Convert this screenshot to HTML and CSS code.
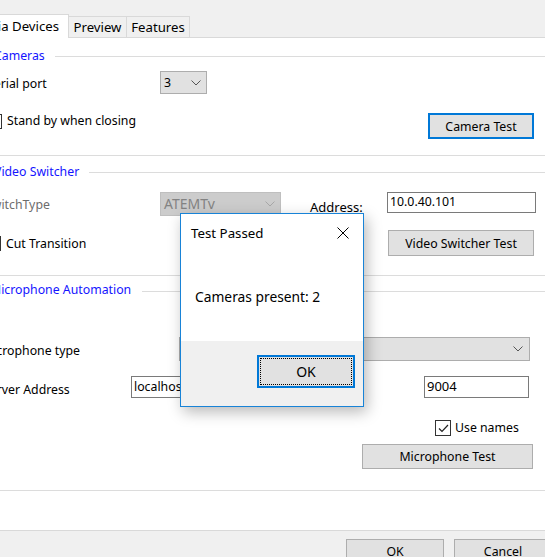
FILE: index.html
```html
<!DOCTYPE html>
<html>
<head>
<meta charset="utf-8">
<link rel="stylesheet" href="styles.css">
</head>
<body>
<div class="window">
  <div class="tabstrip">
    <div class="tab active">Media Devices</div>
    <div class="tab tab-preview">Preview</div>
    <div class="tab tab-features">Features</div>
  </div>
  <div class="panel">
    <section class="group g-cam">
      <div class="group-head"><span class="group-title">Cameras</span><span class="rule"></span></div>
      <div class="row row-serial">
        <span class="lbl lbl-serial">Serial port</span>
        <div class="combo combo-port"><span class="combo-text">3</span><svg class="chev" width="10" height="6" viewBox="0 0 10 6"><path d="M0.5 0.5 L5 5 L9.5 0.5" fill="none" stroke="#555" stroke-width="1"/></svg></div>
      </div>
      <div class="row row-standby">
        <div class="check"><span class="box"></span><span class="check-text">Stand by when closing</span></div>
        <button class="btn btn-focus btn-camera">Camera Test</button>
      </div>
    </section>

    <section class="group g-video">
      <div class="group-head"><span class="group-title">Video Switcher</span><span class="rule"></span></div>
      <div class="row row-switch">
        <span class="lbl lbl-disabled lbl-switch">SwitchType</span>
        <div class="combo combo-disabled combo-switch"><span class="combo-text">ATEMTv</span><svg class="chev" width="10" height="6" viewBox="0 0 10 6"><path d="M0.5 0.5 L5 5 L9.5 0.5" fill="none" stroke="#a8a8a8" stroke-width="1"/></svg></div>
        <span class="lbl lbl-address">Address:</span>
        <div class="textbox tb-address">10.0.40.101</div>
      </div>
      <div class="row row-cut">
        <div class="check check-cut"><span class="box"></span><span class="check-text">Cut Transition</span></div>
        <button class="btn btn-video">Video Switcher Test</button>
      </div>
    </section>

    <section class="group g-mic">
      <div class="group-head"><span class="group-title">Microphone Automation</span><span class="rule"></span></div>
      <div class="row row-mictype">
        <span class="lbl lbl-mictype">Microphone type</span>
        <div class="combo combo-mic"><span class="combo-text"></span><svg class="chev" width="10" height="6" viewBox="0 0 10 6"><path d="M0.5 0.5 L5 5 L9.5 0.5" fill="none" stroke="#555" stroke-width="1"/></svg></div>
      </div>
      <div class="row row-server">
        <span class="lbl lbl-server">Server Address</span>
        <div class="textbox tb-host">localhost</div>
        <div class="textbox tb-port">9004</div>
      </div>
      <div class="row row-names">
        <div class="check check-names"><span class="box checked"><svg width="13" height="13" viewBox="0 0 13 13"><path d="M2 6.5 L5 9.5 L11 3" fill="none" stroke="#222" stroke-width="1.2"/></svg></span><span class="check-text">Use names</span></div>
      </div>
      <div class="row row-mictest">
        <button class="btn btn-mic">Microphone Test</button>
      </div>
    </section>
  </div>
  <div class="footer">
    <button class="btn btn-ok">OK</button>
    <button class="btn btn-cancel">Cancel</button>
  </div>

  <div class="dialog">
    <div class="dlg-title">
      <span class="dlg-title-text">Test Passed</span>
      <svg class="dlg-close" width="12" height="12" viewBox="0 0 12 12"><path d="M0.5 0.5 L11.5 11.5 M11.5 0.5 L0.5 11.5" stroke="#000" stroke-width="1" fill="none"/></svg>
    </div>
    <div class="dlg-body">Cameras present: 2</div>
    <div class="dlg-footer">
      <button class="btn dlg-ok">OK</button>
    </div>
  </div>
</div>
</body>
</html>
```
FILE: styles.css
```css
* { box-sizing: border-box; }
html, body { margin: 0; padding: 0; }
body {
  width: 545px;
  height: 557px;
  overflow: hidden;
  background: #f0f0f0;
  font-family: "Noto Sans", "DejaVu Sans", sans-serif;
  font-size: 12.3px;
  color: #000;
}
.window {
  position: relative;
  width: 545px;
  height: 557px;
  overflow: hidden;
}

/* Base controls */
.btn {
  font-family: inherit;
  font-size: 12.3px;
  color: #000;
  background: #e1e1e1;
  border: 1px solid #adadad;
  padding: 0;
  margin: 0;
  text-align: center;
  white-space: nowrap;
}

/* Tabs */
.tabstrip {
  height: 37px;
  display: flex;
  align-items: flex-end;
  margin-left: -40px;
  font-size: 13.2px;
}
.tab {
  height: 21px;
  border: 1px solid #d9d9d9;
  border-bottom: none;
  background: #f0f0f0;
  text-align: center;
  line-height: 21px;
  margin-left: -1px;
  white-space: nowrap;
}
.tab.active {
  position: relative;
  z-index: 1;
  height: 24px;
  margin-bottom: -1px;
  width: 109px;
  background: #fff;
  line-height: 22px;
  margin-left: 0;
  text-align: right;
  padding-right: 9px;
}
.tab-preview { width: 59px; }
.tab-features { width: 64px; }

/* Panel */
.panel {
  height: 494px;
  background: #fff;
  border-top: 1px solid #d9d9d9;
  border-bottom: 1px solid #d9d9d9;
  padding-top: 10px;
}
.group {
  border-bottom: 1px solid #dcdcdc;
}
.group-head {
  height: 16px;
  display: flex;
  align-items: center;
  margin-left: -6px;
}
.group-title {
  color: #1414ff;
  line-height: 16px;
  white-space: nowrap;
}
.rule {
  flex: 1;
  height: 1px;
  background: #dcdcdc;
  margin-left: 10px;
  margin-top: 1px;
}
.g-cam { padding-bottom: 16px; }
.g-video { margin-top: 8px; padding-bottom: 19px; }
.g-mic { margin-top: 6px; padding-bottom: 21px; }
.g-mic .group-head { margin-left: -10px; }
.g-mic .rule { margin-top: 3px; margin-left: 11px; }

.row {
  display: flex;
  align-items: flex-start;
  white-space: nowrap;
}
.lbl { line-height: 16px; }
.lbl-disabled { color: #6d6d6d; }

/* Cameras rows */
.row-serial { margin-top: 7px; margin-left: -13px; }
.lbl-serial { width: 173px; margin-top: 5px; }
.row-standby { margin-top: 19px; margin-left: -13px; width: 547px; }

/* Video rows */
.row-switch { margin-top: 12px; margin-left: -15px; }
.lbl-switch { width: 175px; margin-top: 5px; }
.lbl-address { margin-left: 29px; width: 77px; margin-top: 7px; font-size: 13px; }
.row-cut { margin-top: 14px; margin-left: -14px; width: 548px; }
.check-cut { margin-top: 6px; }

/* Mic rows */
.row-mictype { margin-top: 39px; margin-left: -18px; }
.lbl-mictype { width: 197px; margin-top: 6px; }
.row-server { margin-top: 15px; margin-left: -17px; width: 546px; }
.lbl-server { width: 148px; margin-top: 6px; }
.row-names { margin-top: 22px; }
.check-names { margin-left: 435px; }
.row-mictest { margin-top: 8px; }
.btn.btn-mic { margin-left: 362px; width: 171px; height: 25px; }

/* Controls */
.combo {
  display: flex;
  align-items: center;
  justify-content: space-between;
  background: #e1e1e1;
  border: 1px solid #adadad;
  padding: 0 5px 0 3px;
}
.combo-text { line-height: 16px; }
.combo-port { width: 47px; height: 23px; }
.combo-switch { width: 121px; height: 24px; }
.combo-mic { width: 351px; height: 24px; padding-right: 6px; }
.combo-disabled {
  background: #cccccc;
  border-color: #bfbfbf;
  color: #838383;
}
.combo-disabled .combo-text { font-size: 14px; }
.textbox {
  background: #fff;
  border: 1px solid #7a7a7a;
  padding-left: 2px;
  line-height: 18px;
}
.tb-address { width: 149px; height: 21px; }
.tb-host { width: 220px; height: 22px; line-height: 19px; }
.tb-port { width: 105px; height: 22px; margin-left: auto; line-height: 19px; font-size: 13px; }

.check {
  display: flex;
  align-items: flex-start;
}
.box {
  width: 15px;
  height: 15px;
  border: 1px solid #333;
  background: #fff;
  margin-top: 1px;
  margin-right: 5px;
  display: flex;
  align-items: center;
  justify-content: center;
}
.check-cut .box { margin-top: 0; }
.check-names .box { margin-right: 4px; width: 16px; height: 16px; margin-top: 0; }
.check-text { line-height: 16px; }

.btn-focus { border: 2px solid #0078d7; }
.btn.btn-camera { margin-left: auto; width: 106px; height: 26px; }
.btn.btn-video { margin-left: auto; width: 146px; height: 26px; }

/* Footer */
.footer {
  display: flex;
  padding-top: 8px;
  padding-left: 346px;
  gap: 10px;
}
.btn.btn-ok, .btn.btn-cancel { width: 98px; height: 24px; flex: none; }

/* Dialog */
.dialog {
  position: absolute;
  left: 180px;
  top: 213px;
  width: 184px;
  height: 194px;
  background: #fff;
  border: 1px solid #1883d7;
  box-shadow: 3px 5px 14px rgba(0, 0, 0, 0.28);
  display: flex;
  flex-direction: column;
  z-index: 5;
}
.dlg-title {
  height: 38px;
  display: flex;
  align-items: center;
  justify-content: space-between;
  padding: 0 14px 0 10px;
}
.dlg-title-text { font-size: 13.3px; }
.dlg-close { display: block; }
.dlg-body {
  height: 89px;
  padding: 37px 0 0 14px;
  line-height: 16px;
  font-size: 13.8px;
}
.dlg-footer {
  flex: 1;
  background: #f0f0f0;
  display: flex;
  justify-content: flex-end;
  align-items: flex-start;
  padding: 14px 8px 0 0;
}
.btn.dlg-ok {
  width: 98px;
  height: 33px;
  border: 2px solid #0078d7;
  outline: 1px dotted #000;
  outline-offset: -4px;
  font-size: 14px;
}
```
